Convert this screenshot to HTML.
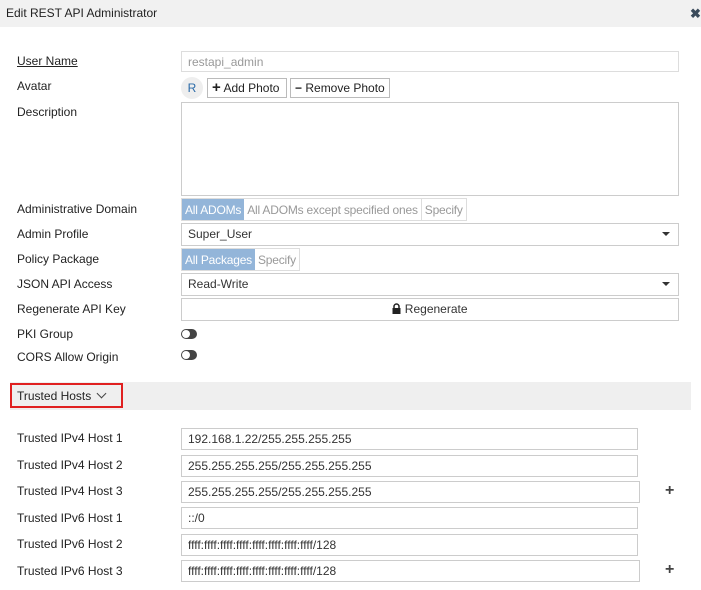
<!DOCTYPE html><html><head><style>
*{box-sizing:border-box}body{margin:0;width:701px;height:590px;background:#fff;font-family:"Liberation Sans",sans-serif;font-size:12px;color:#222;position:relative;overflow:hidden}
.a{position:absolute}
.l{position:absolute;left:17px;font-size:12px;color:#222}
.in{position:absolute;left:181px;border:1px solid #ccc;height:22px;padding:3px 6px;font-size:12px;color:#333;background:#fff}
.seg{position:absolute;left:181px;height:23px;display:flex;border:1px solid #ddd;letter-spacing:-0.2px}
.seg span{padding:4px 3px;color:#999;border-left:1px solid #ddd}
.seg span.on{background:#93b5d9;color:#fff;border:none}
.tg{position:absolute;left:181px;width:16px;height:10px;border-radius:5px;background:#444}
.tg:after{content:"";position:absolute;left:1px;top:1px;width:8px;height:8px;border-radius:50%;background:#fff}
.car{position:absolute;right:8px;top:8px;border-left:4px solid transparent;border-right:4px solid transparent;border-top:4px solid #333}
.plus{position:absolute;left:665px;font-weight:bold;font-size:16px;color:#444}
</style></head><body>
<div class="a" style="left:0;top:0;width:701px;height:27px;background:#f1f1f1"></div>
<div class="a" style="left:6px;top:6px;font-size:12px">Edit REST API Administrator</div>
<div class="a" style="left:690px;top:6px;font-weight:bold;color:#3a4a5a;font-size:13px">✖</div>
<div class="l" style="top:54px;text-decoration:underline">User Name</div>
<div class="in" style="top:51px;width:498px;height:21px;color:#999;border-color:#ddd">restapi_admin</div>
<div class="l" style="top:79px">Avatar</div>
<div class="a" style="left:181px;top:77px;width:22px;height:22px;border-radius:50%;background:#eee;color:#2a6aa8;text-align:center;line-height:22px">R</div>
<div class="a" style="left:207px;top:78px;width:80px;height:20px;border:1px solid #bbb;padding:2px 4px;font-size:12px;white-space:nowrap"><b style="font-size:15px;line-height:14px">+</b> Add Photo</div>
<div class="a" style="left:290px;top:78px;width:100px;height:20px;border:1px solid #bbb;padding:2px 4px;font-size:12px;white-space:nowrap"><b>−</b> Remove Photo</div>
<div class="l" style="top:105px">Description</div>
<div class="in" style="top:102px;width:498px;height:94px"></div>
<div class="l" style="top:202px">Administrative Domain</div>
<div class="seg" style="top:198px"><span class="on">All ADOMs</span><span style="border:none">All ADOMs except specified ones</span><span>Specify</span></div>
<div class="l" style="top:227px">Admin Profile</div>
<div class="in" style="top:223px;width:498px;height:23px">Super_User<div class="car"></div></div>
<div class="l" style="top:252px">Policy Package</div>
<div class="seg" style="top:248px"><span class="on">All Packages</span><span style="border:none">Specify</span></div>
<div class="l" style="top:277px">JSON API Access</div>
<div class="in" style="top:273px;width:498px;height:23px">Read-Write<div class="car"></div></div>
<div class="l" style="top:302px">Regenerate API Key</div>
<div class="in" style="top:298px;width:498px;height:23px;text-align:center"><svg width="9" height="11" viewBox="0 0 9 11" style="vertical-align:-1px"><path d="M2 5V3.5a2.5 2.5 0 0 1 5 0V5" fill="none" stroke="#222" stroke-width="1.5"/><rect x="0.5" y="5" width="8" height="6" fill="#222"/></svg> Regenerate</div>
<div class="l" style="top:327px">PKI Group</div><div class="tg" style="top:329px"></div>
<div class="l" style="top:350px">CORS Allow Origin</div><div class="tg" style="top:350px"></div>
<div class="a" style="left:10px;top:382px;width:681px;height:28px;background:#efefef"></div>
<div class="a" style="left:10px;top:383px;width:113px;height:25px;border:2px solid #e02020"></div>
<div class="a" style="left:17px;top:389px">Trusted Hosts &nbsp;<span style="display:inline-block;width:7px;height:7px;border-right:1px solid #444;border-bottom:1px solid #444;transform:rotate(45deg);position:relative;top:-3px"></span></div>
<div class="l" style="top:431px">Trusted IPv4 Host 1</div><div class="in" style="top:428px;width:457px">192.168.1.22/255.255.255.255</div>
<div class="l" style="top:458px">Trusted IPv4 Host 2</div><div class="in" style="top:455px;width:457px">255.255.255.255/255.255.255.255</div>
<div class="l" style="top:484px">Trusted IPv4 Host 3</div><div class="in" style="top:481px;width:459px">255.255.255.255/255.255.255.255</div><div class="plus" style="top:482px">+</div>
<div class="l" style="top:511px">Trusted IPv6 Host 1</div><div class="in" style="top:507px;width:457px">::/0</div>
<div class="l" style="top:537px">Trusted IPv6 Host 2</div><div class="in" style="top:534px;width:457px">ffff:ffff:ffff:ffff:ffff:ffff:ffff:ffff/128</div>
<div class="l" style="top:564px">Trusted IPv6 Host 3</div><div class="in" style="top:560px;width:459px">ffff:ffff:ffff:ffff:ffff:ffff:ffff:ffff/128</div><div class="plus" style="top:561px">+</div>
</body></html>
